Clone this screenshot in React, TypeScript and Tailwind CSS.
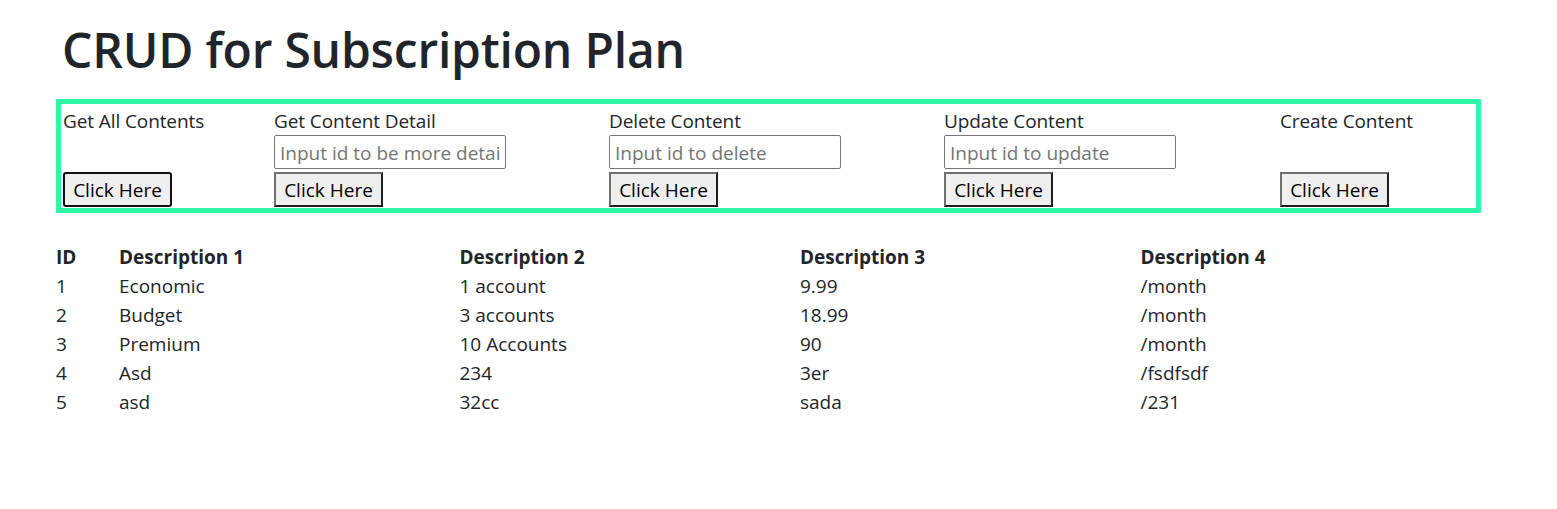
import React from "react";

const plans = [
  { id: 1, d1: "Economic", d2: "1 account", d3: "9.99", d4: "/month" },
  { id: 2, d1: "Budget", d2: "3 accounts", d3: "18.99", d4: "/month" },
  { id: 3, d1: "Premium", d2: "10 Accounts", d3: "90", d4: "/month" },
  { id: 4, d1: "Asd", d2: "234", d3: "3er", d4: "/fsdfsdf" },
  { id: 5, d1: "asd", d2: "32cc", d3: "sada", d4: "/231" },
];

const actions = [
  { label: "Get All Contents", placeholder: null },
  { label: "Get Content Detail", placeholder: "Input id to be more detail" },
  { label: "Delete Content", placeholder: "Input id to delete" },
  { label: "Update Content", placeholder: "Input id to update" },
  { label: "Create Content", placeholder: null },
];

function ClickButton({ focused }: { focused?: boolean }) {
  return (
    <button
      className={
        focused
          ? "h-[35px] w-[109px] border-2 border-[#101010] rounded-[3px] bg-[#efefef] text-black leading-none pt-[2px]"
          : "h-[35px] w-[109px] border-2 border-t-[#707070] border-l-[#707070] border-r-[#1e1e1e] border-b-[#1e1e1e] bg-[#efefef] text-black leading-none pt-[2px]"
      }
    >
      Click Here
    </button>
  );
}

export default function App() {
  return (
    <div
      className="min-h-screen bg-white text-[#212529] px-[56px]"
      style={{ fontFamily: '"Open Sans", "Noto Sans", sans-serif' }}
    >
      <h1 className="pt-[21px] pl-[6px] text-[48px] leading-[57.6px] font-semibold tracking-[-0.2px] mb-[20px]">
        CRUD for Subscription Plan
      </h1>

      {/* Actions panel */}
      <div className="w-[1425px] border-[5px] border-[#2ef8a6] pt-[1px] pl-[2px] pb-[1px]">
        <div className="grid grid-cols-[211px_335px_335px_336px_1fr] text-[19px]">
          {actions.map((a, i) => (
            <div key={a.label} className="flex flex-col">
              <div className="h-[30px] leading-[32px] tracking-[-0.1px]">{a.label}</div>
              <div className="h-[37px]">
                {a.placeholder && (
                  <input
                    placeholder={a.placeholder}
                    className="h-[34px] w-[232px] border border-[#767676] rounded-[2px] px-[5px] pt-[3px] placeholder:text-[#757575] outline-none"
                  />
                )}
              </div>
              <ClickButton focused={i === 0} />
            </div>
          ))}
        </div>
      </div>

      {/* Table */}
      <table className="mt-[30px] w-[1425px] table-fixed text-[19px] leading-[29px] text-left">
        <colgroup>
          <col className="w-[63px]" />
          <col />
          <col />
          <col />
          <col />
        </colgroup>
        <thead>
          <tr className="font-bold">
            <th>ID</th>
            <th>Description 1</th>
            <th>Description 2</th>
            <th>Description 3</th>
            <th>Description 4</th>
          </tr>
        </thead>
        <tbody>
          {plans.map((p) => (
            <tr key={p.id}>
              <td>{p.id}</td>
              <td>{p.d1}</td>
              <td>{p.d2}</td>
              <td>{p.d3}</td>
              <td>{p.d4}</td>
            </tr>
          ))}
        </tbody>
      </table>
    </div>
  );
}
